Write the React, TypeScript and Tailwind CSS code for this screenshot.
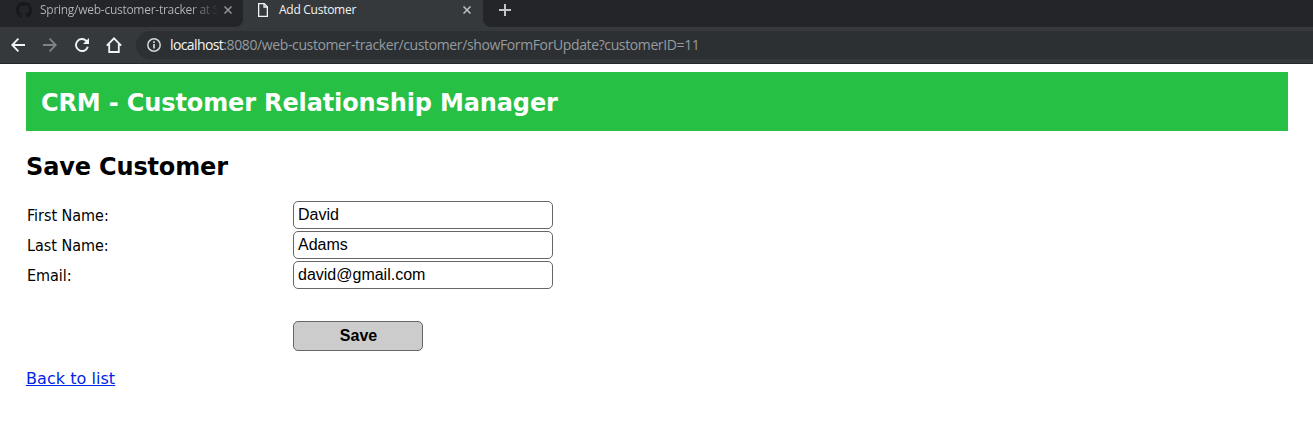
import React, { useState } from "react";

function CloseIcon({ className }: { className: string }) {
  return (
    <svg viewBox="0 0 8 8" className={className} fill="none" stroke="currentColor" strokeWidth="1.5">
      <path d="M0.5 0.5L7.5 7.5M7.5 0.5L0.5 7.5" />
    </svg>
  );
}

function GithubMark() {
  return (
    <svg viewBox="0 0 16 16" className="size-4 shrink-0" fill="#17181b">
      <path d="M8 0C3.58 0 0 3.58 0 8c0 3.54 2.29 6.53 5.47 7.59.4.07.55-.17.55-.38 0-.19-.01-.82-.01-1.49-2.01.37-2.53-.49-2.69-.94-.09-.23-.48-.94-.82-1.13-.28-.15-.68-.52-.01-.53.63-.01 1.08.58 1.23.82.72 1.21 1.87.87 2.33.66.07-.52.28-.87.51-1.07-1.78-.2-3.64-.89-3.64-3.95 0-.87.31-1.59.82-2.15-.08-.2-.36-1.02.08-2.12 0 0 .67-.21 2.2.82.64-.18 1.32-.27 2-.27s1.36.09 2 .27c1.53-1.04 2.2-.82 2.2-.82.44 1.1.16 1.92.08 2.12.51.56.82 1.27.82 2.15 0 3.07-1.87 3.75-3.65 3.95.29.25.54.73.54 1.48 0 1.07-.01 1.93-.01 2.2 0 .21.15.46.55.38A8.01 8.01 0 0 0 16 8c0-4.42-3.58-8-8-8z" />
    </svg>
  );
}

function TabStrip() {
  return (
    <div className="flex h-[27px] bg-[#35393c]">
      <div className="flex w-[243px] items-start rounded-br-lg bg-[#242529] pl-4">
        <div className="mt-[2px]"><GithubMark /></div>
        <span className="ml-2 w-[178px] whitespace-nowrap bg-linear-to-r from-[#b3b7bb] from-85% to-[#2a2b2f] to-100% bg-clip-text font-['Open_Sans',sans-serif] text-[12px] leading-[20px] tracking-[-0.27px] text-transparent">
          Spring/web-customer-tracker at S
        </span>
        <CloseIcon className="ml-[6px] mt-[6px] size-2 shrink-0 text-[#919599]" />
      </div>
      <div className="flex w-[240px] items-start pl-[15px]">
        <svg viewBox="0 0 10 14" className="mt-[3px] h-[14px] w-[10px]" fill="none" stroke="#f1f3f4" strokeWidth="1.3">
          <path d="M0.65 0.65H6.2L9.35 3.8V13.35H0.65ZM6 0.8V4H9.2" />
        </svg>
        <span className="ml-[11px] w-[184px] whitespace-nowrap font-['Open_Sans',sans-serif] text-[12px] leading-[20px] tracking-[-0.27px] text-[#f1f3f4]">Add Customer</span>
        <CloseIcon className="mt-[6px] size-2 text-[#c0c3c6]" />
      </div>
      <div className="flex flex-1 items-start rounded-bl-lg bg-[#242529] pl-4">
        <svg viewBox="0 0 12 12" className="mt-[4px] size-3" stroke="#c3c5c8" strokeWidth="2">
          <path d="M6 0V12M0 6H12" />
        </svg>
      </div>
    </div>
  );
}

function Toolbar() {
  return (
    <div className="flex h-[37px] items-start border-b border-[#25282b] bg-[#35393c] pl-[11px] pt-1">
      <svg viewBox="0 0 14 14" className="mt-[7px] size-[14px]" fill="none" stroke="#f1f3f4" strokeWidth="1.8">
        <path d="M14 7H1.3M7.4 0.7L1.2 7L7.4 13.3" />
      </svg>
      <svg viewBox="0 0 14 14" className="ml-[18px] mt-[7px] size-[14px]" fill="none" stroke="#808386" strokeWidth="1.8">
        <path d="M0 7H12.7M6.6 0.7L12.8 7L6.6 13.3" />
      </svg>
      <svg viewBox="0 0 14 14" className="ml-[18px] mt-[7px] size-[14px]" fill="none" stroke="#f1f3f4" strokeWidth="1.9">
        <path d="M12.8 8.7A6 6 0 1 1 11.3 2.8L12.4 4" />
        <path d="M14 0V6H8Z" fill="#f1f3f4" stroke="none" />
      </svg>
      <svg viewBox="0 0 16 16" className="ml-[17px] mt-[6px] size-4" fill="none" stroke="#f1f3f4" strokeWidth="1.8">
        <path d="M0.8 8.6L8 1.3L15.2 8.6M3.2 7V15H12.8V7" />
      </svg>
      <div className="ml-[14px] flex h-7 flex-1 items-center rounded-l-full bg-[#2c3033] pl-[11px]">
        <svg viewBox="0 0 14 14" className="size-[14px] shrink-0" fill="none" stroke="#d5d7da" strokeWidth="1.5">
          <circle cx="7" cy="7" r="6.2" />
          <path d="M7 6V10.6M7 3.3V5" strokeWidth="1.7" />
        </svg>
        <span className="ml-[9px] whitespace-nowrap font-['Open_Sans',sans-serif] text-[14px] leading-7 text-[#969b9f]">
          <span className="tracking-[-0.6px] text-[#f4f5f6]">localhost</span>
          <span className="tracking-[-0.38px]">:8080/web-customer-tracker/customer/showFormForUpdate?customerID=11</span>
        </span>
      </div>
    </div>
  );
}

function Field({ label, initial }: { label: string; initial: string }) {
  const [value, setValue] = useState(initial);
  return (
    <label className="flex h-7 items-center">
      <span className="w-[266px] pl-px pt-[2px] font-['DejaVu_Sans_Condensed','DejaVu_Sans',sans-serif] text-[16px] [font-stretch:condensed]">
        <span className="tracking-[-0.03px]">{label}</span>
      </span>
      <input
        value={value}
        onChange={(e) => setValue(e.target.value)}
        className="ml-px h-7 w-[260px] rounded-[5px] border border-[#666666] bg-white pb-px pl-1 font-['Liberation_Sans',sans-serif] text-[16px] outline-none"
      />
    </label>
  );
}

export default function App() {
  return (
    <div className="h-[436px] overflow-hidden bg-white text-black">
      <TabStrip />
      <Toolbar />
      <main className="pl-[26px] pr-[25px] pt-2 font-['DejaVu_Sans',sans-serif]">
        <header className="flex h-[59px] items-center bg-[#26c044] pl-[15px] pt-[3px]">
          <h2 className="text-[24px] font-bold leading-[29px] text-white">
            <span className="tracking-[-0.13px]">CRM - Customer Relationship Manager</span>
          </h2>
        </header>
        <h3 className="mt-[22px] text-[24px] font-bold leading-[29px]"><span className="tracking-[-0.15px]">Save Customer</span></h3>
        <form className="mt-[19px]" onSubmit={(e) => e.preventDefault()}>
          <div className="flex flex-col gap-[2px]">
            <Field label="First Name:" initial="David" />
            <Field label="Last Name:" initial="Adams" />
            <Field label="Email:" initial="david@gmail.com" />
          </div>
          <button className="ml-[267px] mt-8 flex h-[30px] w-[130px] items-center justify-center rounded-[5px] border border-[#666666] bg-[#cccccc] pl-px font-['Liberation_Sans',sans-serif] text-[16px] font-bold">
            Save
          </button>
        </form>
        <p className="mt-[18px] text-[16px] leading-5">
          <a href="#" className="tracking-[0.05px] text-[#0024e6] underline">Back to list</a>
        </p>
      </main>
    </div>
  );
}
